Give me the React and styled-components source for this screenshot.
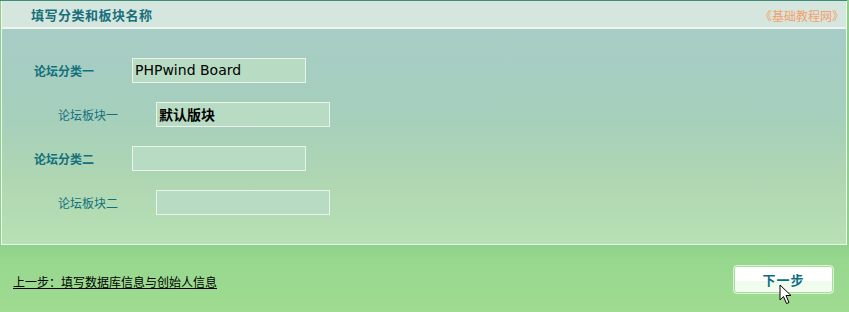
import React from "react";
import styled, { createGlobalStyle } from "styled-components";

const Global = createGlobalStyle`
  html, body {
    margin: 0;
    padding: 0;
  }
  body {
    width: 849px;
    height: 312px;
    overflow: hidden;
    font-family: "Noto Sans CJK SC", "DejaVu Sans", sans-serif;
    font-size: 12px;
    background: linear-gradient(to bottom, #8ccf87 0px, #8ed28a 244px, #97d78e 260px, #a0dc92 312px);
  }
`;

const Page = styled.div`
  width: 849px;
  height: 312px;
  display: flex;
  flex-direction: column;
`;

const Panel = styled.div`
  width: 847px;
  height: 245px;
  box-sizing: border-box;
  border-top: 1px solid #3f8c7a;
  display: flex;
  flex-direction: column;
`;

const Inner = styled.div`
  flex: 1;
  margin-left: 1px;
  border: 1px solid #eef5ee;
  border-top: none;
  display: flex;
  flex-direction: column;
`;

const Header = styled.div`
  height: 28px;
  box-sizing: border-box;
  background: #d5e6df;
  border-bottom: 2px solid #eef5ee;
  display: flex;
  align-items: center;
  justify-content: space-between;
  padding: 0 2px 0 29px;
`;

const Title = styled.div`
  font-size: 13px;
  font-weight: 700;
  color: #17707a;
  letter-spacing: 0.5px;
`;

const Source = styled.div`
  font-size: 12px;
  color: #f59f68;
  padding-top: 3px;
`;

const Body = styled.div`
  flex: 1;
  background: linear-gradient(to bottom, #a7ccc6 0%, #a6cfbc 40%, #afd6b2 70%, #b8e1b4 100%);
  padding: 29px 0 0 0;
  display: flex;
  flex-direction: column;
  gap: 20px;
`;

const Row = styled.div`
  display: flex;
  align-items: center;
  height: 24px;
  padding-left: ${(p) => (p.$sub ? 56 : 32)}px;
`;

const Label = styled.div`
  width: 98px;
  color: #12717c;
  font-weight: ${(p) => (p.$sub ? 400 : 700)};
  font-size: 12px;
`;

const Field = styled.div`
  width: 174px;
  height: 25px;
  box-sizing: border-box;
  background: #b8dcc3;
  border: 1px solid #eaf2ea;
  display: flex;
  align-items: center;
  padding-left: 2px;
  color: #000;
  font-family: "DejaVu Sans", "Noto Sans CJK SC", sans-serif;
  font-size: 14px;
  font-weight: ${(p) => (p.$bold ? 700 : 400)};
  & span {
    font-family: "Noto Sans CJK SC", sans-serif;
    font-size: 14px;
  }
`;

const Footer = styled.div`
  flex: 1;
  display: flex;
  align-items: center;
  justify-content: space-between;
  padding: 0 15px 4px 13px;
`;

const BackLink = styled.a`
  color: #000;
  font-size: 12px;
  text-decoration: underline;
  padding-top: 10px;
`;

const NextWrap = styled.div`
  position: relative;
  margin-top: 5px;
`;

const NextBtn = styled.button`
  width: 101px;
  height: 29px;
  border: 1px solid #d8f3d2;
  border-radius: 4px;
  box-shadow: inset 0 0 0 1px #a8dca0;
  background: linear-gradient(to bottom, #ffffff 0%, #ffffff 55%, #eefcec 56%, #f4fdf2 100%);
  color: #0c6d80;
  font-family: "Noto Sans CJK SC", sans-serif;
  font-size: 13px;
  font-weight: 700;
  letter-spacing: 1px;
  padding: 0;
`;

const Cursor = styled.svg`
  position: absolute;
  left: 46px;
  top: 19px;
`;

export default function App() {
  return (
    <Page>
      <Global />
      <Panel>
        <Inner>
          <Header>
            <Title>填写分类和板块名称</Title>
            <Source>《基础教程网》</Source>
          </Header>
          <Body>
            <Row>
              <Label>论坛分类一</Label>
              <Field>PHPwind Board</Field>
            </Row>
            <Row $sub>
              <Label $sub>论坛板块一</Label>
              <Field $bold>
                <span>默认版块</span>
              </Field>
            </Row>
            <Row>
              <Label>论坛分类二</Label>
              <Field />
            </Row>
            <Row $sub>
              <Label $sub>论坛板块二</Label>
              <Field />
            </Row>
          </Body>
        </Inner>
      </Panel>
      <Footer>
        <BackLink href="#">上一步：填写数据库信息与创始人信息</BackLink>
        <NextWrap>
          <NextBtn>下一步</NextBtn>
          <Cursor width="14" height="22" viewBox="0 0 14 22">
            <path
              d="M1 1 L1 16 L4.5 12.5 L7.5 19.5 L10 18.5 L7 11.5 L12 11.5 Z"
              fill="#fff"
              stroke="#000"
              strokeWidth="1"
              strokeLinejoin="miter"
            />
          </Cursor>
        </NextWrap>
      </Footer>
    </Page>
  );
}
